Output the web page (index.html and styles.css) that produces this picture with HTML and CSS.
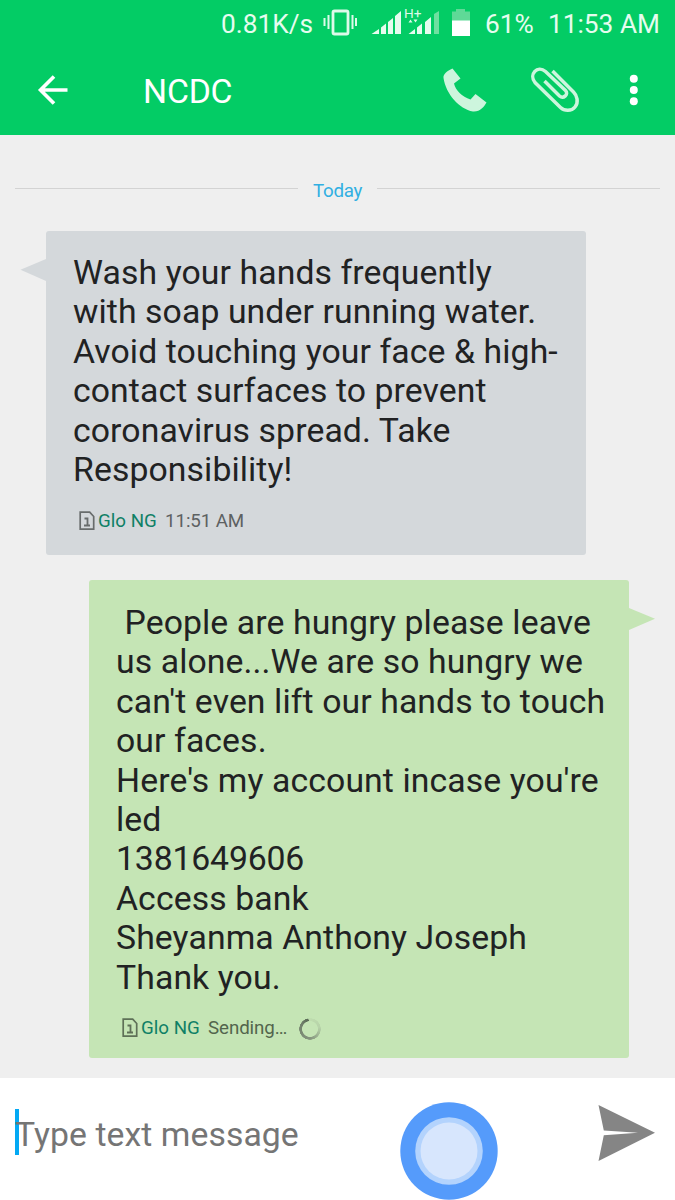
FILE: index.html
```html
<!DOCTYPE html>
<html lang="en">
<head>
<meta charset="utf-8">
<title>NCDC</title>
<link rel="stylesheet" href="styles.css">
</head>
<body>
<div class="screen">
  <header class="top">
    <div class="status">
      <span class="speed">0.81K/s</span>
      <svg class="vibrate" viewBox="322 8 36 30" width="36" height="30">
        <rect x="333" y="11" width="15" height="23" rx="1.5" fill="none" stroke="#ddfae9" stroke-width="2.8"/>
        <path d="M328.500 15v14M324.500 18v8M352.500 15v14M356 18v8" stroke="#ddfae9" stroke-width="2"/>
      </svg>
      <svg class="signal" viewBox="370 4 70 34" width="70" height="34">
        <path d="M371.500 34 379 29v5zM381 27.500l5-4V34h-5zM388 22l5-4v16h-5zM395 16l6-5v23h-6zM408.500 34l6.500-5v5zM417 27.500l5-4V34h-5zM425 22l6-5v17h-6z" fill="#e6fcef"/>
        <path d="M434 14l5-3v23h-5z" fill="#6fe0a0"/>
        <path d="M408.500 22.500l2-3 2 3zM413.500 19.500h4l-2 3z" fill="#ddfae9"/>
        <text class="network" x="404" y="17.500" textLength="17.500" lengthAdjust="spacingAndGlyphs">H+</text>
      </svg>
      <svg class="battery" viewBox="450 7 20 30" width="20" height="30">
        <path d="M452 21v-9.500h4V9h9v2.500h5V21z" fill="#5fd997"/>
        <path d="M452 20.500h18V36h-18z" fill="#fff"/>
      </svg>
      <span class="percent">61%</span>
      <span class="clock">11:53 AM</span>
    </div>
    <div class="bar">
      <svg class="back" viewBox="37 74 32 32" width="32" height="32">
        <path d="M67.500 90H40M54 76.500 40.500 90 54 103.500" fill="none" stroke="#fff" stroke-width="3.600"/>
      </svg>
      <h1 class="title">NCDC</h1>
      <svg class="call" viewBox="442 66 46 48" width="46" height="48">
        <path d="M452.500 68.500 C447 71 443 74 443.500 78 C446 94 459 109 473 111.500 C480 112 484 107 486.500 102.500 L475.500 94 L470.500 99.500 C462 97 455.500 90 454 83.500 L460.500 78.500 Z" fill="#cdf5dd"/>
      </svg>
      <svg class="clip" viewBox="530 66 50 48" width="50" height="48">
        <path d="M552.500 71 L573.500 92 C577 95.500 579 102 575 107 C571.500 111.300 564.500 111.300 560.500 107.500 L535 82.500 C528.500 74.500 537.500 64.500 545.500 71.500 L565.500 90.500 C569 94 563.500 99.500 559.500 96 L544.500 81" fill="none" stroke="#cdf5dd" stroke-width="3.500"/>
      </svg>
      <svg class="more" viewBox="628 72 12 36" width="12" height="36">
        <g fill="#fff"><circle cx="633.800" cy="78.700" r="4"/><circle cx="633.800" cy="90" r="4"/><circle cx="633.800" cy="101.300" r="4"/></g>
      </svg>
    </div>
  </header>

  <main class="thread">
    <div class="day"><i class="rule"></i><span class="today">Today</span><i class="rule"></i></div>

    <article class="bubble received">
      <svg class="tail" viewBox="0 0 26 22" width="26" height="22"><path d="M26 0v22L.5 10.800z" fill="#d4d8db"/></svg>
      <p class="message">Wash your hands frequently<br>with soap under running water.<br>Avoid touching your face &amp; high-<br>contact surfaces to prevent<br>coronavirus spread. Take<br>Responsibility!</p>
      <div class="meta">
        <svg class="sim" viewBox="0 0 16 20" width="16" height="20"><path d="M1.200 1.200h9.500l4 4.300V18.200H1.200z" fill="none" stroke="#686c6c" stroke-width="1.700"/><path d="M5.500 7.500h3v7M5 14.500h6" fill="none" stroke="#686c6c" stroke-width="1.800"/></svg>
        <span class="carrier">Glo NG</span><span class="state">11:51 AM</span>
      </div>
    </article>

    <article class="bubble sent">
      <svg class="tail" viewBox="0 0 26 22" width="26" height="22"><path d="M0 0v22L26 10.800z" fill="#c5e5b5"/></svg>
      <p class="message">&nbsp;People are hungry please leave<br>us alone...We are so hungry we<br>can't even lift our hands to touch<br>our faces.<br>Here's my account incase you're<br>led<br><span class="digits">1381649606</span><br>Access bank<br>Sheyanma Anthony Joseph<br>Thank you.</p>
      <div class="meta">
        <svg class="sim" viewBox="0 0 16 20" width="16" height="20"><path d="M1.200 1.200h9.500l4 4.300V18.200H1.200z" fill="none" stroke="#5e7057" stroke-width="1.700"/><path d="M5.500 7.500h3v7M5 14.500h6" fill="none" stroke="#5e7057" stroke-width="1.800"/></svg>
        <span class="carrier">Glo NG</span><span class="state">Sending…</span><i class="spinner"></i>
      </div>
    </article>
  </main>

  <footer class="composer">
    <div class="field"><i class="caret"></i><span class="placeholder">Type text message</span></div>
    <svg class="send" viewBox="598 1104 58 58" width="58" height="58">
      <path d="M598.500 1105 655 1132.800 598.500 1161 603.800 1135.300 638 1132.800 603.800 1130.500z" fill="#858585"/>
    </svg>
    <svg class="assist" viewBox="0 0 98 98" width="98" height="98">
      <circle cx="49" cy="49" r="48.700" fill="#559bfb"/><circle cx="49" cy="49" r="33.800" fill="#b3d3fd"/><circle cx="49" cy="49" r="28.500" fill="#d7e6fd"/>
    </svg>
  </footer>
</div>
</body>
</html>
```

FILE: styles.css
```css
* { box-sizing: border-box; }
body { margin: 0; font-family: Roboto, sans-serif; }
svg { display: block; flex: none; }

.screen {
  width: 675px;
  height: 1200px;
  display: flex;
  flex-direction: column;
  background: #efefef;
  overflow: hidden;
  white-space: nowrap;
}

.top { height: 135px; background: #03cc65; color: #fff; }
.status { height: 48px; display: flex; align-items: flex-start; font-size: 26.25px; line-height: 31px; color: #e6fcef; }
.speed { width: 101px; margin: 9px 0 0 221px; }
.vibrate { margin-top: 8px; }
.signal { margin: 4px 0 0 12px; }
.network { font-size: 13.5px; fill: #ddfae9; }
.battery { margin: 7px 0 0 10px; }
.percent { width: 63px; margin: 9px 0 0 15px; }
.clock { margin-top: 9px; }

.bar { height: 87px; display: flex; align-items: flex-start; }
.back { margin: 26px 0 0 37px; }
.title { width: 299px; margin: 24px 0 0 74px; font-size: 33.75px; font-weight: 400; line-height: 40px; letter-spacing: -0.2px; }
.call { margin-top: 18px; }
.clip { margin: 18px 0 0 42px; }
.more { margin: 24px 0 0 48px; }

.thread { height: 943px; display: flex; flex-direction: column; }
.day { height: 96px; padding: 41px 15px 0; display: flex; align-items: flex-start; }
.rule { flex: 1; height: 1px; margin-top: 12px; background: #d3d3d3; }
.today { margin: 4px 15px 0; font-size: 18.75px; line-height: 22px; letter-spacing: -0.3px; color: #31afe2; }

.bubble { position: relative; width: 540px; padding: 22px 0 0 27px; border-radius: 3px; }
.received { height: 324px; margin-left: 46px; background: #d4d8db; }
.sent { height: 478px; margin: 25px 0 0 89px; background: #c5e5b5; }
.tail { position: absolute; }
.received .tail { left: -26px; top: 28px; }
.sent .tail { right: -26px; top: 28px; }
.message { margin: 0; font-size: 33.75px; line-height: 39.4px; letter-spacing: 0.1px; color: #212223; }
.sent .message { padding-top: 1px; }
.digits { letter-spacing: -0.15px; }
.meta { display: flex; align-items: flex-start; height: 22px; padding-left: 6px; font-size: 18.75px; line-height: 22px; }
.received .meta { margin-top: 21px; }
.sent .meta { margin-top: 20px; }
.sim { margin: 1px 3px 0 0; }
.carrier { width: 67px; color: #0f8066; }
.state { color: #5d6162; letter-spacing: -0.1px; }
.sent .state { width: 91px; color: #53654d; }
.spinner {
  width: 22px;
  height: 22px;
  margin-top: 1px;
  border-radius: 50%;
  background: conic-gradient(#bedcae 0deg, #b7d3a9 80deg, #84947d 180deg, #71806b 300deg, #596a55 350deg, #bedcae 352deg);
  -webkit-mask: radial-gradient(circle, transparent 7.6px, #000 8.2px, #000 10.6px, transparent 11px);
  mask: radial-gradient(circle, transparent 7.6px, #000 8.2px, #000 10.6px, transparent 11px);
}

.composer { position: relative; height: 122px; display: flex; align-items: flex-start; background: #fff; }
.field { display: flex; width: 583px; margin: 31px 0 0 15px; }
.caret { width: 4px; height: 46px; margin-right: -4px; background: #03a9f4; }
.placeholder { position: relative; margin-top: 6px; font-size: 33.75px; line-height: 40px; letter-spacing: 0.06px; color: #757575; }
.send { margin-top: 26px; }
.assist { position: absolute; left: 400px; top: 24px; }
```
